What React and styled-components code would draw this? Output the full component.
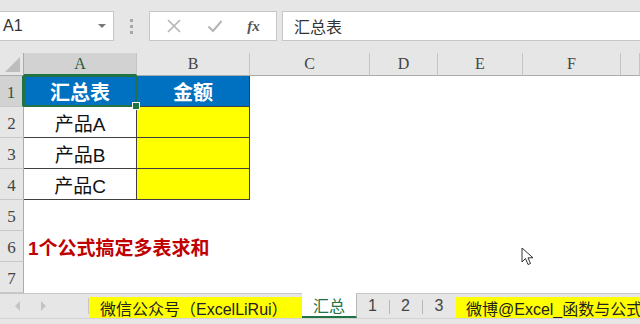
import React from 'react';
import styled, { createGlobalStyle } from 'styled-components';

const GlobalStyle = createGlobalStyle`
  html, body {
    margin: 0;
    padding: 0;
    width: 640px;
    height: 324px;
    overflow: hidden;
    background: #e6e6e6;
  }
  * { box-sizing: border-box; }
`;

const SANS = `"Liberation Sans", "Noto Sans CJK SC", sans-serif`;
const SERIF = `"Liberation Serif", "DejaVu Serif", serif`;
const GREEN = '#217346';

const Window = styled.div`
  display: flex;
  flex-direction: column;
  width: 640px;
  height: 324px;
  background: #e6e6e6;
  font-family: ${SANS};
`;

/* ---------- formula bar ---------- */
const Toolbar = styled.div`
  display: flex;
  align-items: center;
  height: 53px;
  padding-bottom: 1px;
`;

const NameBox = styled.div`
  display: flex;
  align-items: center;
  justify-content: space-between;
  width: 114px;
  height: 30px;
  padding: 0 7px 0 3px;
  background: #fff;
  border: 1px solid #c6c6c6;
  border-left: none;
  font-size: 16px;
  color: #333;
`;

const Caret = styled.span`
  width: 0;
  height: 0;
  border-left: 4px solid transparent;
  border-right: 4px solid transparent;
  border-top: 4px solid #777;
`;

const Grip = styled.div`
  display: flex;
  flex-direction: column;
  gap: 3px;
  margin: 0 16px 0 16px;
  span {
    width: 3px;
    height: 3px;
    background: #a8a8a8;
  }
`;

const FxBox = styled.div`
  display: flex;
  align-items: center;
  justify-content: space-around;
  width: 128px;
  height: 30px;
  padding: 0 4px;
  background: #fff;
  border: 1px solid #c6c6c6;
`;

const FxLabel = styled.span`
  font-family: ${SERIF};
  font-style: italic;
  font-weight: bold;
  font-size: 15px;
  color: #555;
`;

const FormulaInput = styled.div`
  flex: 1;
  display: flex;
  align-items: center;
  height: 30px;
  margin-left: 5px;
  padding-left: 11px;
  background: #fff;
  border: 1px solid #c6c6c6;
  border-right: none;
  font-size: 16px;
  color: #333;
`;

/* ---------- sheet grid ---------- */
const Sheet = styled.div`
  position: relative;
  display: grid;
  grid-template-columns: 24px 113px 113px 120px 68px 85px 98px 1fr;
  grid-template-rows: 23px repeat(7, 31px);
  background: #fff;
`;

const Corner = styled.div`
  position: relative;
  background: #e6e6e6;
  border-right: 1px solid #ababab;
  border-bottom: 1px solid #ababab;
  &::after {
    content: '';
    position: absolute;
    right: 3px;
    bottom: 3px;
    width: 0;
    height: 0;
    border-left: 15px solid transparent;
    border-bottom: 15px solid #bdbdbd;
  }
`;

const ColHead = styled.div`
  display: flex;
  align-items: center;
  justify-content: center;
  background: ${(p) => (p.$active ? '#d2d2d2' : '#e6e6e6')};
  border-right: 1px solid #c4c4c4;
  border-bottom: ${(p) => (p.$active ? `2px solid ${GREEN}` : '1px solid #ababab')};
  font-family: ${SERIF};
  font-size: 16px;
  color: ${(p) => (p.$active ? '#2a5a3c' : '#444')};
`;

const RowHead = styled.div`
  display: flex;
  align-items: flex-end;
  justify-content: center;
  padding-bottom: 3px;
  background: ${(p) => (p.$active ? '#d2d2d2' : '#e6e6e6')};
  border-right: ${(p) => (p.$active ? `2px solid ${GREEN}` : '1px solid #ababab')};
  border-bottom: 1px solid #c8c8c8;
  font-family: ${SERIF};
  font-size: 17px;
  color: ${(p) => (p.$active ? '#2a5a3c' : '#444')};
`;

const Cell = styled.div`
  position: relative;
  display: flex;
  align-items: center;
  justify-content: ${(p) => (p.$align === 'left' ? 'flex-start' : 'center')};
  padding-left: ${(p) => (p.$align === 'left' ? '4px' : '0')};
  background: ${(p) => p.$bg || 'transparent'};
  border-right: ${(p) => (p.$boxed ? '1px solid #3f3f3f' : 'none')};
  border-bottom: ${(p) => (p.$boxed ? '1px solid #3f3f3f' : 'none')};
  color: ${(p) => p.$color || '#111'};
  font-size: ${(p) => p.$size || 19}px;
  font-weight: ${(p) => (p.$bold ? 700 : 400)};
  white-space: nowrap;
  overflow: visible;
  z-index: ${(p) => (p.$selected ? 3 : p.$spill ? 2 : 'auto')};
  ${(p) =>
    p.$selected &&
    `
    &::before {
      content: '';
      position: absolute;
      inset: -1px -1px -1px -1px;
      border: 2px solid ${GREEN};
    }
    &::after {
      content: '';
      position: absolute;
      right: -4px;
      bottom: -4px;
      width: 6px;
      height: 6px;
      background: ${GREEN};
      border: 1px solid #fff;
    }
  `}
`;

const Pointer = styled.svg`
  position: absolute;
  left: 521px;
  top: 194px;
  z-index: 5;
`;

/* ---------- sheet tabs ---------- */
const TabBar = styled.div`
  display: flex;
  height: 25px;
  background: #e6e6e6;
  border-top: 1px solid #c6c6c6;
`;

const NavArea = styled.div`
  display: flex;
  align-items: center;
  gap: 21px;
  width: 89px;
  padding-left: 15px;
  border-right: 1px solid #c6c6c6;
  margin: 4px 0 4px 0;
`;

const NavArrow = styled.span`
  width: 0;
  height: 0;
  border-top: 5px solid transparent;
  border-bottom: 5px solid transparent;
  ${(p) =>
    p.$dir === 'left'
      ? 'border-right: 5px solid #c4c4c4;'
      : 'border-left: 5px solid #c4c4c4;'}
`;

const NoteTab = styled.div`
  display: flex;
  align-items: center;
  width: ${(p) => (p.$grow ? 'auto' : `${p.$w}px`)};
  flex: ${(p) => (p.$grow ? 1 : 'none')};
  margin-top: 3px;
  padding-left: ${(p) => p.$pad}px;
  background: #ffff00;
  font-size: 16px;
  color: #222;
  white-space: nowrap;
  overflow: hidden;
`;

const SheetTab = styled.div`
  display: flex;
  align-items: center;
  justify-content: center;
  width: ${(p) => p.$w}px;
  margin-top: -1px;
  background: ${(p) => (p.$active ? '#fff' : 'transparent')};
  border-bottom: ${(p) => (p.$active ? `2px solid ${GREEN}` : 'none')};
  border-right: 1px solid ${(p) => (p.$active ? '#b8b8b8' : 'transparent')};
  font-size: 16px;
  color: ${(p) => (p.$active ? GREEN : '#444')};
`;

const TabSep = styled.span`
  width: 1px;
  margin: 6px 0 4px;
  background: #b8b8b8;
`;

const BottomStrip = styled.div`
  flex: 1;
  background: #e6e6e6;
  border-top: 1px solid #d4d4d4;
`;

const columns = ['A', 'B', 'C', 'D', 'E', 'F', ''];

const tableRows = [
  { a: '汇总表', b: '金额', head: true },
  { a: '产品A' },
  { a: '产品B' },
  { a: '产品C' },
];

function renderRow(r) {
  const cells = [];
  for (let c = 0; c < 7; c++) {
    const key = `${r}-${c}`;
    const t = tableRows[r - 1];
    if (t && c === 0) {
      cells.push(
        <Cell
          key={key}
          $boxed
          $bg={t.head ? '#0070c0' : '#fff'}
          $color={t.head ? '#fff' : '#111'}
          $bold={t.head}
          $size={t.head ? 20 : 19}
          $selected={t.head}
        >
          {t.a}
        </Cell>
      );
    } else if (t && c === 1) {
      cells.push(
        <Cell
          key={key}
          $boxed
          $bg={t.head ? '#0070c0' : '#ffff00'}
          $color="#fff"
          $bold
          $size={20}
        >
          {t.b || ''}
        </Cell>
      );
    } else if (r === 6 && c === 0) {
      cells.push(
        <Cell key={key} $align="left" $color="#c00000" $bold $size={19} $spill>
          1个公式搞定多表求和
        </Cell>
      );
    } else {
      cells.push(<Cell key={key} />);
    }
  }
  return cells;
}

export default function App() {
  return (
    <Window>
      <GlobalStyle />
      <Toolbar>
        <NameBox>
          A1
          <Caret />
        </NameBox>
        <Grip>
          <span />
          <span />
          <span />
        </Grip>
        <FxBox>
          <svg width="16" height="16" viewBox="0 0 16 16">
            <path d="M2 2 L14 14 M14 2 L2 14" stroke="#b4b4b4" strokeWidth="1.6" fill="none" />
          </svg>
          <svg width="16" height="16" viewBox="0 0 16 16">
            <path d="M1.5 8.5 L6 13 L14.5 3" stroke="#b4b4b4" strokeWidth="2" fill="none" />
          </svg>
          <FxLabel>fx</FxLabel>
        </FxBox>
        <FormulaInput>汇总表</FormulaInput>
      </Toolbar>

      <Sheet>
        <Corner />
        {columns.map((c, i) => (
          <ColHead key={c || 'g'} $active={i === 0}>
            {c}
          </ColHead>
        ))}
        {[1, 2, 3, 4, 5, 6, 7].map((r) => (
          <React.Fragment key={r}>
            <RowHead $active={r === 1}>{r}</RowHead>
            {renderRow(r)}
          </React.Fragment>
        ))}
        <Pointer width="14" height="20" viewBox="0 0 14 20">
          <path
            d="M1 1 L1 15 L4.5 11.5 L7 17.5 L9.5 16.5 L7 10.8 L12 10.8 Z"
            fill="#fff"
            stroke="#333"
            strokeWidth="1"
            strokeLinejoin="round"
          />
        </Pointer>
      </Sheet>

      <TabBar>
        <NavArea>
          <NavArrow $dir="left" />
          <NavArrow $dir="right" />
        </NavArea>
        <NoteTab $w={213} $pad={11}>微信公众号（ExcelLiRui）</NoteTab>
        <SheetTab $active $w={55}>汇总</SheetTab>
        <SheetTab $w={32}>1</SheetTab>
        <TabSep />
        <SheetTab $w={32}>2</SheetTab>
        <TabSep />
        <SheetTab $w={33}>3</SheetTab>
        <NoteTab $grow $pad={10}>微博@Excel_函数与公式</NoteTab>
      </TabBar>
      <BottomStrip />
    </Window>
  );
}
